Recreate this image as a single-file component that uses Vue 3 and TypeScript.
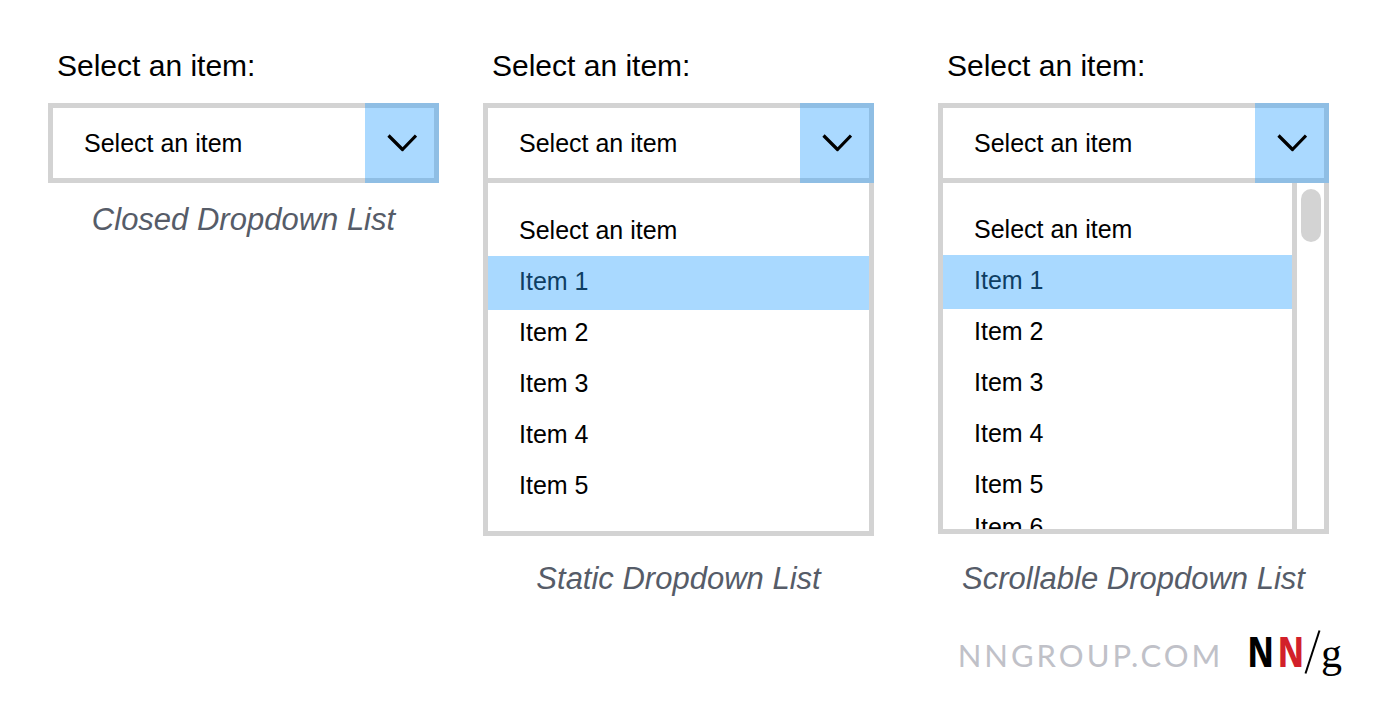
<script setup lang="ts">
import { ref } from 'vue'

type Variant = 'closed' | 'static' | 'scrollable'

interface Dropdown {
  variant: Variant
  caption: string
  items: string[]
}

const placeholder = 'Select an item'

const dropdowns: Dropdown[] = [
  { variant: 'closed', caption: 'Closed Dropdown List', items: [] },
  {
    variant: 'static',
    caption: 'Static Dropdown List',
    items: ['Item 1', 'Item 2', 'Item 3', 'Item 4', 'Item 5'],
  },
  {
    variant: 'scrollable',
    caption: 'Scrollable Dropdown List',
    items: ['Item 1', 'Item 2', 'Item 3', 'Item 4', 'Item 5', 'Item 6'],
  },
]

const active = ref('Item 1')
</script>

<template>
  <main class="page">
    <section class="examples">
      <figure v-for="d in dropdowns" :key="d.variant" class="example" :class="d.variant">
        <label class="label" :for="`field-${d.variant}`">Select an item:</label>
        <div class="field">
          <select :id="`field-${d.variant}`" class="select">
            <option>{{ placeholder }}</option>
          </select>
          <span class="toggle" aria-hidden="true">
            <svg class="chevron" width="30" height="20" viewBox="0 0 30 20">
              <path d="M1.5 2.5 L15.5 16.5 L29 2.5" fill="none" stroke="#000" stroke-width="3.2" stroke-linejoin="round" />
            </svg>
          </span>
        </div>
        <div v-if="d.items.length" class="panel">
          <select v-model="active" class="list" :size="d.items.length + 1" :aria-label="d.caption">
            <option class="option">{{ placeholder }}</option>
            <option v-for="item in d.items" :key="item" class="option">{{ item }}</option>
          </select>
          <div v-if="d.variant === 'scrollable'" class="track" aria-hidden="true">
            <div class="thumb"></div>
          </div>
        </div>
        <figcaption class="caption">{{ d.caption }}</figcaption>
      </figure>
    </section>
    <footer class="footer">
      <a class="site" href="#">NNGROUP.COM</a>
      <span class="logo">
        <span class="n">N</span><span class="n red">N</span>
        <svg class="slash" width="17" height="44" viewBox="0 0 17 44" aria-hidden="true">
          <path d="M15.5 0.5 L1.5 43.5" stroke="#000" stroke-width="2" />
        </svg>
        <span class="g">g</span>
      </span>
    </footer>
  </main>
</template>

<style>
body {
  margin: 0;
  background: #fff;
}
</style>

<style scoped>
.page {
  padding-top: 46px;
  font-family: 'Liberation Sans', Arial, sans-serif;
  color: #000;
}
.examples {
  display: grid;
  grid-template-columns: 1fr 44px 1fr 64px 1fr;
  padding: 0 55px 0 48px;
}
.example {
  margin: 0;
  min-width: 0;
  display: flex;
  flex-direction: column;
}
.static {
  grid-column: 3;
}
.scrollable {
  grid-column: 5;
}
.label {
  padding-left: 9px;
  margin-bottom: 17px;
  font-size: 30px;
  line-height: 40px;
}
.field {
  position: relative;
  height: 80px;
}
.select {
  box-sizing: border-box;
  width: 100%;
  height: 100%;
  margin: 0;
  padding: 0 80px 0 31px;
  border: 5px solid #d3d3d3;
  border-radius: 0;
  background: #fff;
  color: #000;
  font-family: inherit;
  font-size: 25px;
  appearance: none;
}
.toggle {
  position: absolute;
  top: 0;
  right: 0;
  bottom: 0;
  width: 74px;
  display: flex;
  align-items: center;
  justify-content: center;
  background: rgba(37, 158, 255, 0.39);
  pointer-events: none;
}
.panel {
  display: flex;
  height: 348px;
  border: 5px solid #d3d3d3;
  border-top: 0;
  background: #fff;
}
.list {
  flex: 1;
  min-width: 0;
  height: 100%;
  margin: 0;
  padding: 22px 0 0;
  box-sizing: border-box;
  border: 0;
  border-radius: 0;
  outline: 0;
  background: #fff;
  color: #000;
  font-family: inherit;
  font-size: 25px;
  appearance: none;
  overflow: hidden;
}
.option {
  box-sizing: border-box;
  height: 51px;
  min-height: 0;
  padding: 11px 0 0 31px;
}
.option:checked {
  height: 54px;
  margin-bottom: -3px;
  background: linear-gradient(#a9d9ff, #a9d9ff);
  color: #0e3e63;
}
.scrollable .panel {
  height: 346px;
}
.scrollable .list {
  padding-top: 21px;
}
.scrollable .option:last-child {
  height: 35px;
  padding-top: 3px;
}
.track {
  display: flex;
  justify-content: center;
  width: 27px;
  padding-top: 6px;
  border-left: 5px solid #d3d3d3;
}
.thumb {
  width: 20px;
  height: 53px;
  border-radius: 10px;
  background: #d3d3d3;
}
.caption {
  margin-top: 23px;
  font-size: 31px;
  line-height: 40px;
  font-style: italic;
  text-align: center;
  color: #565c68;
}
.closed .caption {
  margin-top: 17px;
}
.scrollable .caption {
  margin-top: 25px;
}
.footer {
  display: flex;
  justify-content: flex-end;
  align-items: baseline;
  margin-top: 22px;
  padding-right: 42px;
  line-height: 60px;
}
.site {
  margin-right: 24px;
  font-family: Lato, sans-serif;
  font-size: 31px;
  font-weight: 400;
  letter-spacing: 3px;
  color: #c0c1c8;
  text-decoration: none;
}
.logo {
  display: flex;
  align-items: baseline;
}
.n {
  font-family: 'Open Sans Condensed', 'Roboto Condensed', Roboto, sans-serif;
  font-size: 42px;
  font-weight: 700;
}
.red {
  margin-left: 4px;
  color: #d2202a;
}
.slash {
  align-self: center;
}
.g {
  font-family: 'Liberation Serif', serif;
  font-size: 42px;
}
</style>
